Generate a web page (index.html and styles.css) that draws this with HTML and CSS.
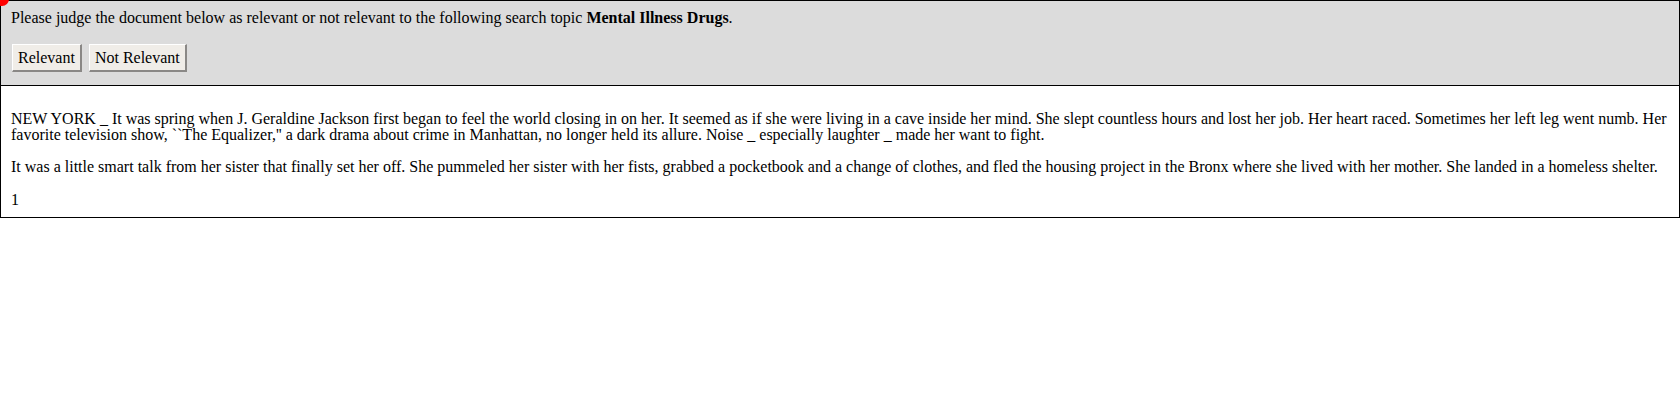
FILE: index.html
```html
<!DOCTYPE html>
<html>
<head>
<meta charset="utf-8">
<link rel="stylesheet" href="styles.css">
</head>
<body>
<span class="dot"></span>
<div class="frame">
  <div class="head">
    <p class="prompt">Please judge the document below as relevant or not relevant to the following search topic <b>Mental Illness Drugs</b>.</p>
    <div class="actions">
      <button class="btn">Relevant</button>
      <button class="btn">Not Relevant</button>
    </div>
  </div>
  <div class="doc">
    <p class="para">NEW YORK _ It was spring when J. Geraldine Jackson first began to feel the world closing in on her. It seemed as if she were living in a cave inside her mind. She slept countless hours and lost her job. Her heart raced. Sometimes her left leg went numb. Her favorite television show, ``The Equalizer,'' a dark drama about crime in Manhattan, no longer held its allure. Noise _ especially laughter _ made her want to fight.</p>
    <p class="para">It was a little smart talk from her sister that finally set her off. She pummeled her sister with her fists, grabbed a pocketbook and a change of clothes, and fled the housing project in the Bronx where she lived with her mother. She landed in a homeless shelter.</p>
    <div class="pageno">1</div>
  </div>
</div>
</body>
</html>
```
FILE: styles.css
```css
html, body {
  margin: 0;
  padding: 0;
  background: #fff;
}
body {
  font-family: "Liberation Serif", "Times New Roman", serif;
  font-size: 16px;
  color: #000;
  position: relative;
}
.dot {
  position: absolute;
  left: -5px;
  top: -8px;
  width: 14px;
  height: 14px;
  border-radius: 50%;
  background: #ff0000;
}
.frame {
  border: 1px solid #000;
}
.head {
  background: #dcdcdc;
  border-bottom: 1px solid #000;
  padding: 8px 10px 13px;
}
.prompt {
  margin: 0 0 17px;
  line-height: 18px;
}
.actions {
  display: flex;
  gap: 7px;
  padding-left: 1px;
}
.btn {
  font-family: "Liberation Serif", "Times New Roman", serif;
  font-size: 16px;
  color: #000;
  background: #f0ede8;
  border-style: solid;
  border-width: 1px 2px 2px 1px;
  border-color: #ffffff #8a8886 #8a8886 #ffffff;
  padding: 3px 5px;
  height: 28px;
  line-height: 18px;
}
.doc {
  padding: 10px 10px 8px;
}
.para {
  margin: 16px 0;
  line-height: 16px;
}
.para:first-child {
  margin-top: 15px;
}
.pageno {
  line-height: 18px;
  margin-top: 16px;
}
```
